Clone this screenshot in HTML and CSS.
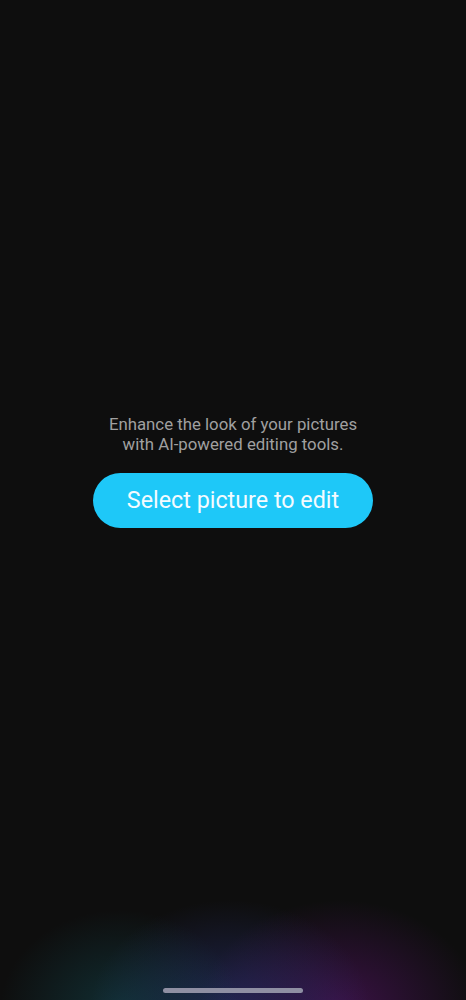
FILE: index.html
```html
<!DOCTYPE html>
<html>
<head>
<meta charset="utf-8">
<link rel="stylesheet" href="styles.css">
</head>
<body>
<div class="screen">
  <main class="content">
    <p class="tagline">Enhance the look of your pictures<br>with AI-powered editing tools.</p>
    <button class="select-btn">Select picture to edit</button>
  </main>
  <div class="glow"></div>
  <div class="nav-handle"></div>
</div>
</body>
</html>
```

FILE: styles.css
```css
html, body {
  margin: 0;
  padding: 0;
  background: #0e0e0e;
}
.screen {
  position: relative;
  width: 466px;
  height: 1000px;
  overflow: hidden;
  background: #0e0e0e;
  font-family: Roboto, "Liberation Sans", sans-serif;
}
.content {
  display: flex;
  flex-direction: column;
  align-items: center;
  padding-top: 414px;
  position: relative;
  z-index: 2;
}
.tagline {
  margin: 0;
  color: #a0a0a0;
  font-size: 16.8px;
  line-height: 20px;
  text-align: center;
}
.select-btn {
  margin-top: 19px;
  width: 280px;
  height: 55px;
  border: none;
  border-radius: 28px;
  background: #1ec8f8;
  color: #f4fbff;
  font-family: Roboto, "Liberation Sans", sans-serif;
  font-size: 23.3px;
  padding: 0 0 2px;
}
.glow {
  position: absolute;
  left: 0;
  right: 0;
  bottom: 0;
  height: 150px;
  background:
    radial-gradient(ellipse 120px 100px at 120px 160px, rgba(20, 85, 95, 0.45), transparent 100%),
    radial-gradient(ellipse 140px 110px at 230px 160px, rgba(45, 55, 130, 0.55), transparent 100%),
    radial-gradient(ellipse 140px 110px at 340px 160px, rgba(95, 20, 115, 0.55), transparent 100%);
  z-index: 1;
}
.nav-handle {
  position: absolute;
  left: 163px;
  bottom: 7px;
  width: 140px;
  height: 5px;
  border-radius: 3px;
  background: #8f8fa3;
  z-index: 3;
}
```
